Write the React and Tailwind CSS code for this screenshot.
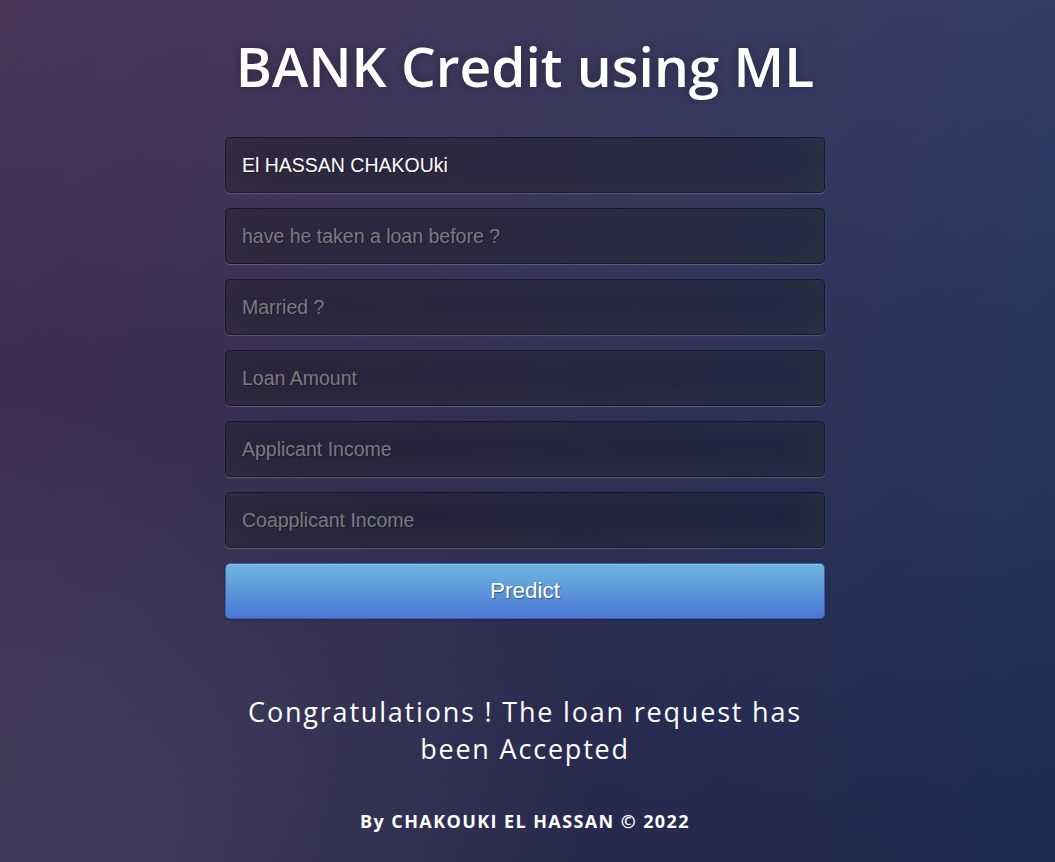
const fields = [
    { value: "El HASSAN CHAKOUki", placeholder: "Name" },
    { value: "", placeholder: "have he taken a loan before ?" },
    { value: "", placeholder: "Married ?" },
    { value: "", placeholder: "Loan Amount" },
    { value: "", placeholder: "Applicant Income" },
    { value: "", placeholder: "Coapplicant Income" },
];

const App = () => {
    return (
        <div className="min-h-[862px] w-full bg-[radial-gradient(ellipse_at_0%_100%,rgba(104,110,130,.28)_10%,rgba(138,114,76,0)_40%),linear-gradient(to_bottom,rgba(57,173,219,.25)_0%,rgba(42,60,87,.4)_100%),linear-gradient(135deg,#500d2a_0%,#14204e_100%)] font-['Open_Sans',sans-serif] text-white">
            <div className="flex justify-center pr-[5px]">
                <div className="w-[600px] pt-[28px]">

                    {/* Title */}
                    <h1 className="whitespace-nowrap text-center text-[55px] font-semibold leading-[76px] [text-shadow:0_0_10px_rgba(0,0,0,0.3)]">
                        BANK Credit using ML
                    </h1>

                    {/* Form */}
                    <form className="mt-[33px] flex flex-col gap-[15px]" onSubmit={(e) => e.preventDefault()}>
                        {fields.map((f) => (
                            <input
                                key={f.placeholder}
                                type="text"
                                defaultValue={f.value}
                                placeholder={f.placeholder}
                                className="h-[56px] w-full rounded-[5px] border border-[rgba(0,0,0,0.3)] bg-[rgba(0,0,0,0.3)] px-4 font-['Liberation_Sans',Arial,sans-serif] text-[19.5px] text-white outline-none shadow-[inset_0_-5px_45px_rgba(100,100,100,0.2),0_1px_1px_rgba(255,255,255,0.2)] [text-shadow:1px_1px_1px_rgba(0,0,0,0.3)] placeholder:text-[#7b7b7f]"
                            />
                        ))}

                        <button
                            type="submit"
                            className="h-[56px] w-full rounded-[5px] border border-[#3762bc] bg-[linear-gradient(to_bottom,#6eb6de,#4a77d4)] font-['Liberation_Sans',Arial,sans-serif] text-[22.5px] text-white shadow-[inset_0_1px_0_rgba(255,255,255,0.2),0_1px_2px_rgba(0,0,0,0.3)] [text-shadow:1px_1px_1px_rgba(0,0,0,0.4)]"
                        >
                            Predict
                        </button>
                    </form>

                    {/* Result */}
                    <p className="mt-[74px] text-center text-[27px] leading-[37px] tracking-[1.8px]">
                        Congratulations ! The loan request has been Accepted
                    </p>

                    {/* Footer */}
                    <p className="mt-[41px] text-center text-[18px] font-bold tracking-[1.4px]">
                        By CHAKOUKI EL HASSAN © 2022
                    </p>

                </div>
            </div>
        </div>
    );
};

export default App;
